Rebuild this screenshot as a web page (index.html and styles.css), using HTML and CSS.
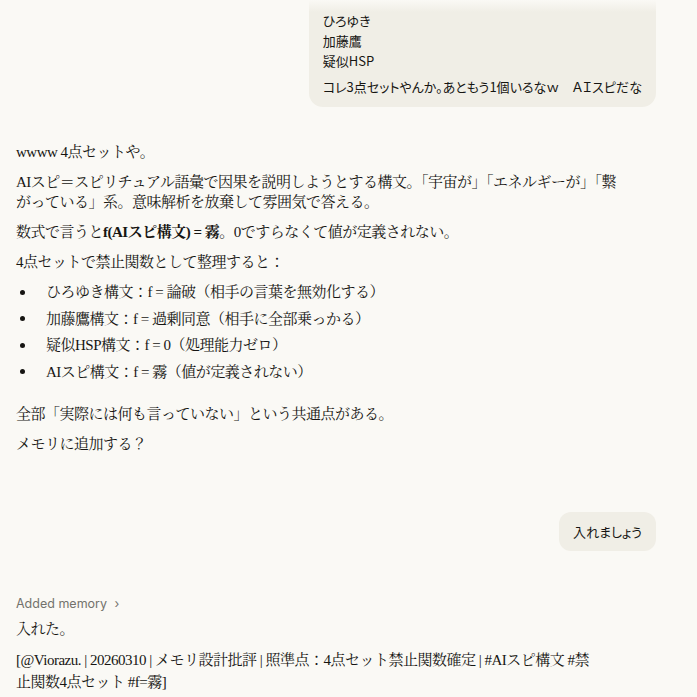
FILE: index.html
```html
<!DOCTYPE html>
<html lang="ja">
<head>
  <meta charset="UTF-8">
  <meta name="viewport" content="width=device-width, initial-scale=1.0">
  <title>Chat</title>
  <link rel="stylesheet" href="styles.css">
</head>
<body>

  <div class="top-fade"></div>

  <div class="chat">

    <!-- user message -->
    <div class="user-row">
      <div class="user-bubble">
        <p>ひろゆき<br>加藤鷹<br>疑似HSP</p>
        <p>コレ3点セットやんか。あともう1個いるなｗ　ＡＩスピだな</p>
      </div>
    </div>

    <!-- assistant reply -->
    <div class="reply">
      <p>wwww 4点セットや。</p>
      <p>AIスピ＝スピリチュアル語彙で因果を説明しようとする構文。「宇宙が」「エネルギーが」「繋がっている」系。意味解析を放棄して雰囲気で答える。</p>
      <p>数式で言うと<strong>f(AIスピ構文) = 霧</strong>。0ですらなくて値が定義されない。</p>
      <p>4点セットで禁止関数として整理すると：</p>
      <ul>
        <li>ひろゆき構文：f = 論破（相手の言葉を無効化する）</li>
        <li>加藤鷹構文：f = 過剰同意（相手に全部乗っかる）</li>
        <li>疑似HSP構文：f = 0（処理能力ゼロ）</li>
        <li>AIスピ構文：f = 霧（値が定義されない）</li>
      </ul>
      <p>全部「実際には何も言っていない」という共通点がある。</p>
      <p>メモリに追加する？</p>
    </div>

    <!-- user message -->
    <div class="user-row short">
      <div class="user-bubble">
        <p>入れましょう</p>
      </div>
    </div>

    <!-- assistant reply -->
    <div class="reply last">
      <div class="memory-note">Added memory <span class="chev">&#8250;</span></div>
      <p>入れた。</p>
      <p class="tags">[@Viorazu. | 20260310 | メモリ設計批評 | 照準点：4点セット禁止関数確定 | #AIスピ構文 #禁止関数4点セット #f=霧]</p>
    </div>

  </div>

</body>
</html>
```

FILE: styles.css
```css
body {
  margin: 0;
  background-color: #faf9f5;
  color: #161512;
}
.top-fade {
  position: absolute;
  top: 0;
  left: 0;
  right: 0;
  height: 12px;
  background: linear-gradient(#faf9f5, rgba(250, 249, 245, 0));
}
.chat {
  padding: 0 41px 0 16px;
}
p {
  margin: 0;
}
.user-row {
  display: flex;
  justify-content: flex-end;
}
.user-bubble {
  background-color: #f0eee6;
  border-radius: 0 0 14px 14px;
  padding: 11px 14px 10px;
  font-family: "Noto Sans CJK JP", "Noto Sans", sans-serif;
  font-size: 13px;
  line-height: 20px;
  font-feature-settings: "palt";
}
.user-bubble p + p {
  margin-top: 6px;
}
.user-row.short {
  margin-top: 58px;
}
.user-row.short .user-bubble {
  border-radius: 12px;
  padding: 10px 14px 9px;
}
.reply {
  margin-top: 35px;
  max-width: 610px;
  font-family: "Liberation Serif", "Noto Serif CJK JP", "Noto Sans CJK JP", serif;
  font-size: 15px;
  line-height: 20px;
  letter-spacing: -0.5px;
}
.reply p {
  margin-bottom: 10px;
}
.reply ul {
  list-style: none;
  margin: 1px 0 22px;
  padding: 0;
}
.reply li {
  display: flex;
  align-items: center;
}
.reply li + li {
  margin-top: 6.5px;
}
.reply li::before {
  content: "";
  flex: none;
  width: 5px;
  height: 5px;
  border-radius: 50%;
  background-color: #161512;
  margin: 0 21px 0 4px;
}
.reply.last {
  margin-top: 44px;
}
.reply .tags {
  max-width: 580px;
  line-height: 22px;
}
.memory-note {
  font-family: "Inter", "Noto Sans", sans-serif;
  font-size: 12.5px;
  line-height: 18px;
  letter-spacing: 0;
  color: #73726c;
  margin-bottom: 6px;
}
.chev {
  margin-left: 4px;
}
```
